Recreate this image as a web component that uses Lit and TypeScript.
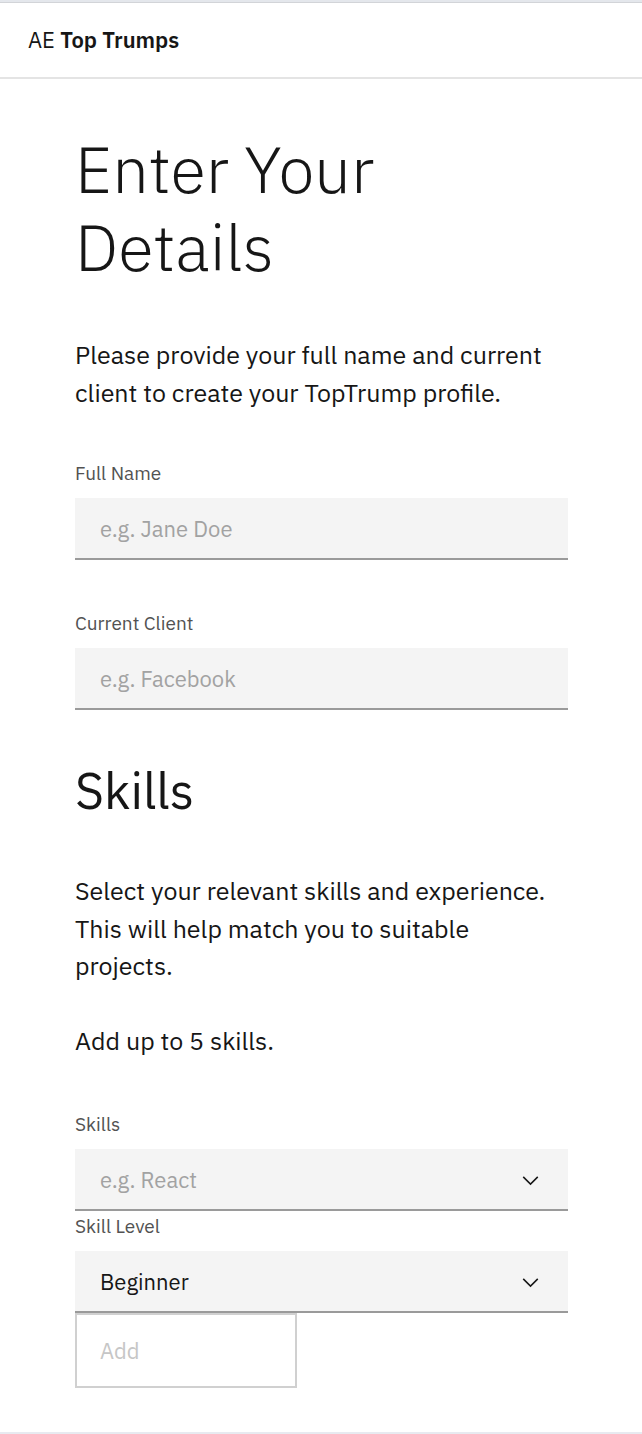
import { LitElement, html, css, svg } from "lit";
import { customElement } from "lit/decorators.js";

const chevron = html`<svg class="chevron" viewBox="0 0 16 16" aria-hidden="true">
  ${svg`<path d="M8 11 3 6l.7-.7L8 9.6l4.3-4.3.7.7z"></path>`}
</svg>`;

@customElement("app-root")
export class AppRoot extends LitElement {
  static styles = css`
    :host {
      display: block;
      min-height: 100vh;
      box-sizing: border-box;
      border-top: 2px solid #e4e7ec;
      border-bottom: 2px solid #e8eaf0;
      background: #fff;
      color: #161616;
      font-family: "IBM Plex Sans", Roboto, sans-serif;
      font-size: 25px;
      line-height: 1.5;
    }
    * {
      box-sizing: border-box;
    }
    .header {
      display: flex;
      align-items: center;
      height: 77px;
      padding: 0 28px 2px;
      border-top: 1px solid #d2d4d8;
      border-bottom: 2px solid #e4e4e4;
      font-size: 22px;
    }
    .brand {
      color: inherit;
      text-decoration: none;
    }
    .brand-name {
      font-weight: 600;
    }
    .content {
      padding: 51px 74px 42px 75px;
    }
    .title {
      margin: 0 0 50px;
      font-size: 65px;
      font-weight: 300;
      line-height: 78px;
    }
    .subtitle {
      margin: 0 0 51px;
      font-size: 50px;
      font-weight: 400;
      line-height: 60px;
    }
    .text {
      margin: 0 0 50px;
    }
    .text.spaced {
      margin-bottom: 37px;
    }
    .text.closing {
      margin-bottom: 53px;
    }
    .field {
      margin-bottom: 51px;
    }
    .field.tight {
      margin-bottom: 3px;
    }
    .field.last {
      margin-bottom: 0;
    }
    .label {
      display: block;
      margin-bottom: 13px;
      color: #525252;
      font-size: 19px;
      line-height: 24px;
    }
    .control {
      position: relative;
    }
    .input {
      display: block;
      width: 100%;
      height: 62px;
      padding: 0 25px;
      border: 0;
      border-bottom: 2px solid #9a9a9a;
      border-radius: 0;
      outline: 0;
      appearance: none;
      background: #f4f4f4;
      color: #161616;
      font-family: inherit;
      font-size: 22px;
    }
    .input::placeholder {
      color: #a2a2a2;
      opacity: 1;
    }
    .toggle {
      position: absolute;
      top: 0;
      right: 0;
      display: grid;
      place-items: center;
      width: 75px;
      height: 62px;
      padding: 0;
      border: 0;
      background: none;
      color: #161616;
      pointer-events: none;
    }
    .chevron {
      width: 25px;
      height: 25px;
      fill: currentColor;
    }
    .add {
      display: block;
      width: 222px;
      height: 75px;
      padding: 0 23px;
      border: 2px solid #d0d0d0;
      background: #fff;
      color: #c6c6c6;
      font-family: inherit;
      font-size: 22px;
      text-align: left;
    }
  `;

  render() {
    return html`
      <header class="header">
        <a class="brand" href="#">AE <span class="brand-name">Top Trumps</span></a>
      </header>
      <main class="content">
        <h1 class="title">Enter Your<br />Details</h1>
        <p class="text">
          Please provide your full name and current client to create your TopTrump profile.
        </p>
        <div class="field">
          <label class="label" for="name">Full Name</label>
          <input class="input" id="name" type="text" placeholder="e.g. Jane Doe" />
        </div>
        <div class="field">
          <label class="label" for="client">Current Client</label>
          <input class="input" id="client" type="text" placeholder="e.g. Facebook" />
        </div>
        <h2 class="subtitle">Skills</h2>
        <p class="text spaced">
          Select your relevant skills and experience. This will help match you to suitable projects.
        </p>
        <p class="text closing">Add up to 5 skills.</p>
        <div class="field tight">
          <label class="label" for="skill">Skills</label>
          <div class="control">
            <input class="input" id="skill" type="text" role="combobox" aria-expanded="false" placeholder="e.g. React" />
            <button class="toggle" type="button" aria-label="Open menu">${chevron}</button>
          </div>
        </div>
        <div class="field last">
          <label class="label" for="level">Skill Level</label>
          <div class="control">
            <select class="input" id="level">
              <option>Beginner</option>
              <option>Intermediate</option>
              <option>Expert</option>
            </select>
            <span class="toggle">${chevron}</span>
          </div>
        </div>
        <button class="add" type="button" disabled>Add</button>
      </main>
    `;
  }
}
